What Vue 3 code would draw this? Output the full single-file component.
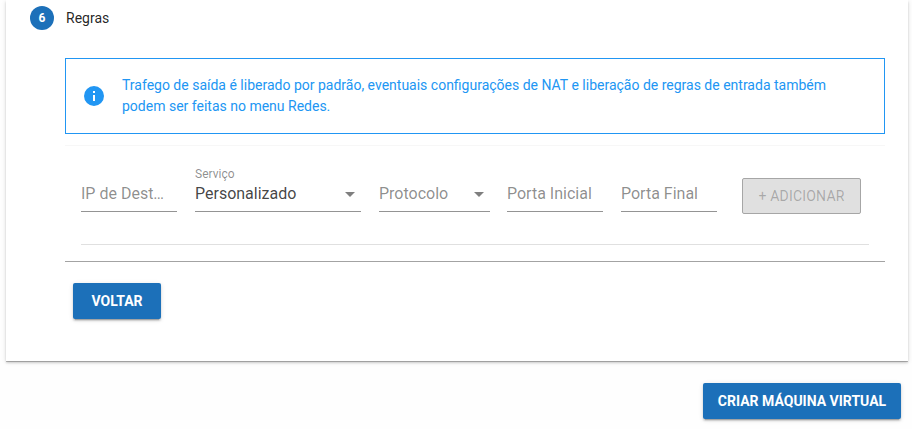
<script setup>
const ipLabel = 'IP de Dest…'
</script>

<template>
  <div class="page">
    <section class="card">
      <header class="step">
        <span class="badge">6</span>
        <span class="step-label">Regras</span>
      </header>
      <div class="content">
        <div class="alert">
          <svg class="info" viewBox="0 0 24 24" width="24" height="24">
            <path fill="#2196f3" d="M13 9h-2V7h2m0 10h-2v-6h2m-1-9A10 10 0 0 0 2 12a10 10 0 0 0 10 10 10 10 0 0 0 10-10A10 10 0 0 0 12 2z" />
          </svg>
          <p class="alert-text">Trafego de saída é liberado por padrão, eventuais configurações de NAT e liberação de regras de entrada também podem ser feitas no menu Redes.</p>
        </div>
        <div class="rules">
          <div class="form-row">
            <div class="field f-ip"><span class="placeholder">{{ ipLabel }}</span></div>
            <div class="field f-service">
              <span class="float-label">Serviço</span>
              <span class="value">Personalizado</span>
              <span class="caret"></span>
            </div>
            <div class="field f-proto">
              <span class="placeholder">Protocolo</span>
              <span class="caret"></span>
            </div>
            <div class="field f-start"><span class="placeholder">Porta Inicial</span></div>
            <div class="field f-end"><span class="placeholder">Porta Final</span></div>
            <button class="btn-disabled" disabled>+ ADICIONAR</button>
          </div>
        </div>
        <div class="dark-line"></div>
        <button class="btn back">VOLTAR</button>
      </div>
    </section>
    <footer class="actions">
      <button class="btn create">CRIAR MÁQUINA VIRTUAL</button>
    </footer>
  </div>
</template>

<style>
html, body { margin: 0; background: #fff; }
</style>

<style scoped>
.page {
  width: 912px;
  height: 429px;
  overflow: hidden;
  background: #fefefe;
  font-family: Roboto, "Liberation Sans", sans-serif;
}
.card {
  box-sizing: border-box;
  width: 902px;
  height: 361px;
  margin-left: 6px;
  background: #fff;
  box-shadow: 0 1px 0 0 rgba(0,0,0,.22), 0 2px 2px 0 rgba(0,0,0,.14), 0 1px 5px 0 rgba(0,0,0,.12);
}
.step {
  display: flex;
  align-items: center;
  gap: 12px;
  padding: 6px 0 0 24px;
  height: 24px;
}
.badge {
  width: 24px;
  height: 24px;
  border-radius: 50%;
  background: #1c70b9;
  color: #fff;
  font-size: 12px;
  font-weight: 700;
  display: flex;
  align-items: center;
  justify-content: center;
}
.step-label {
  font-size: 14px;
  color: rgba(0,0,0,.87);
}
.content {
  padding: 28px 23px 0 59px;
}
.alert {
  box-sizing: border-box;
  height: 76px;
  border: 1px solid #2196f3;
  display: flex;
  align-items: center;
  padding: 0 16px;
}
.info { flex: none; margin-right: 16px; }
.alert-text {
  margin: 0;
  font-size: 14px;
  line-height: 21px;
  color: #2196f3;
}
.rules {
  margin-top: 11px;
  border-top: 1px solid #f7f7f7;
  padding: 0 16px;
}
.form-row {
  display: flex;
  align-items: flex-start;
  height: 82px;
  border-bottom: 1px solid #e0e0e0;
  padding-top: 16px;
}
.field {
  position: relative;
  box-sizing: border-box;
  height: 50px;
  border-bottom: 1px solid #949494;
  font-size: 16px;
  margin-right: 18px;
}
.f-ip { width: 96px; }
.f-service { width: 166px; }
.f-proto { width: 111px; margin-right: 17px; }
.f-start { width: 96px; }
.f-end { width: 96px; margin-right: 25px; }
.placeholder, .value {
  position: absolute;
  left: 0;
  bottom: 7px;
  line-height: 20px;
  white-space: nowrap;
}
.placeholder { color: rgba(0,0,0,.46); }
.value { color: rgba(0,0,0,.74); }
.float-label {
  position: absolute;
  left: 0;
  top: 4px;
  font-size: 12px;
  line-height: 16px;
  color: rgba(0,0,0,.46);
}
.caret {
  position: absolute;
  right: 6px;
  bottom: 14px;
  width: 0;
  height: 0;
  border-left: 5px solid transparent;
  border-right: 5px solid transparent;
  border-top: 5px solid rgba(0,0,0,.5);
}
.btn-disabled {
  box-sizing: border-box;
  width: 119px;
  height: 36px;
  margin-top: 16px;
  padding: 0;
  border: 1px solid #a6a6a6;
  border-radius: 2px;
  background: #e0e0e0;
  color: rgba(0,0,0,.26);
  font: 400 14px Roboto, "Liberation Sans", sans-serif;
  letter-spacing: .2px;
}
.dark-line {
  height: 1px;
  margin-top: 16px;
  background: #a3a3a3;
}
.btn {
  display: block;
  height: 36px;
  padding: 0;
  border: 0;
  border-radius: 2px;
  background: #1c70b9;
  color: #fff;
  font: 700 14px Roboto, "Liberation Sans", sans-serif;
  box-shadow: 0 3px 1px -2px rgba(0,0,0,.2), 0 2px 2px 0 rgba(0,0,0,.14), 0 1px 5px 0 rgba(0,0,0,.12);
}
.back { width: 88px; margin: 21px 0 0 8px; }
.actions {
  display: flex;
  justify-content: flex-end;
  padding: 22px 11px 0 0;
}
.create { width: 198px; }
</style>
